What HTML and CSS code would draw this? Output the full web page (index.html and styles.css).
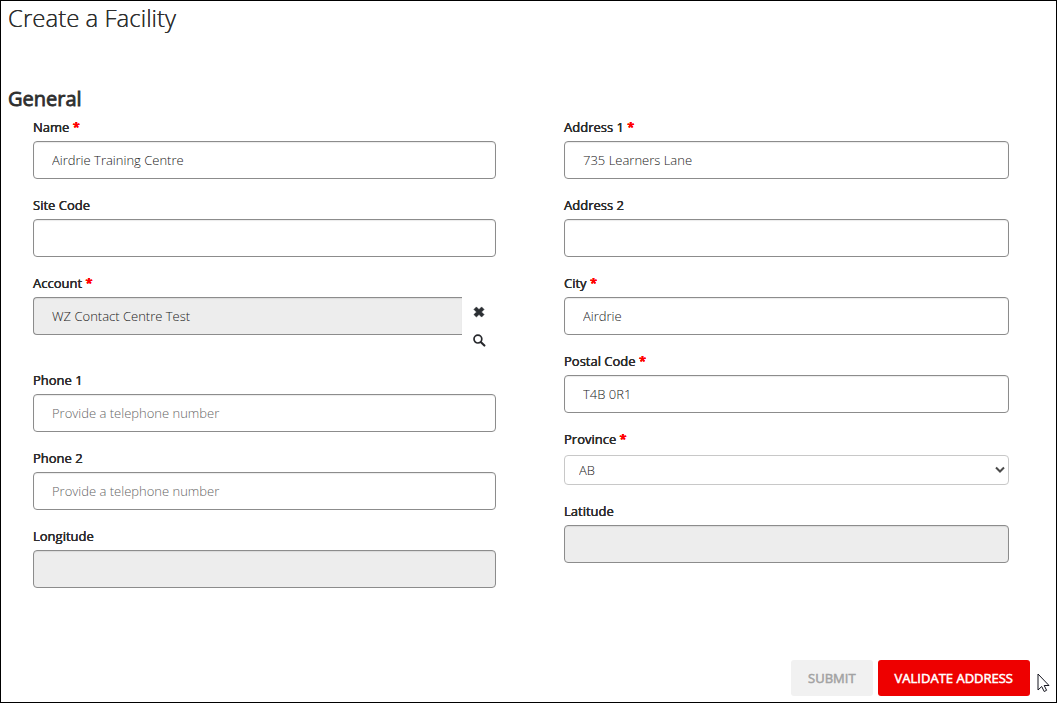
FILE: index.html
```html
<!DOCTYPE html>
<html lang="en">
<head>
<meta charset="utf-8">
<meta name="viewport" content="width=device-width, initial-scale=1">
<title>Create a Facility</title>
<link rel="stylesheet" href="styles.css">
</head>
<body>
<main class="page">
  <h1 class="title">Create a Facility</h1>
  <form>
    <h2 class="section-title">General</h2>
    <div class="columns">
      <div class="column">
        <div class="field">
          <label for="name">Name <span class="required">*</span></label>
          <input class="control" id="name" type="text" value="Airdrie Training Centre">
        </div>
        <div class="field">
          <label for="site-code">Site Code</label>
          <input class="control" id="site-code" type="text">
        </div>
        <div class="field">
          <label for="account">Account <span class="required">*</span></label>
          <div class="lookup">
            <input class="control" id="account" type="text" value="WZ Contact Centre Test" readonly>
            <div class="lookup-actions">
              <button class="icon-button" type="button" aria-label="Clear account">
                <svg width="12" height="12" viewBox="0 0 12 12"><path d="M3.4 .9 6 3.5 8.6 .9 11.1 3.4 8.5 6 11.1 8.6 8.6 11.1 6 8.5 3.4 11.1 .9 8.6 3.5 6 .9 3.4Z" fill="#2b2f33" stroke="#2b2f33" stroke-width=".5" stroke-linejoin="round"/></svg>
              </button>
              <button class="icon-button" type="button" aria-label="Search account">
                <svg width="13" height="13" viewBox="0 0 13 13" fill="none" stroke="#26282c"><circle cx="4.9" cy="5.1" r="3.9" stroke-width="1.7"/><path d="m8 8.2 3.4 3.4" stroke-width="2.1" stroke-linecap="round"/></svg>
              </button>
            </div>
          </div>
        </div>
        <div class="field">
          <label for="phone1">Phone 1</label>
          <input class="control" id="phone1" type="tel" placeholder="Provide a telephone number">
        </div>
        <div class="field">
          <label for="phone2">Phone 2</label>
          <input class="control" id="phone2" type="tel" placeholder="Provide a telephone number">
        </div>
        <div class="field">
          <label for="longitude">Longitude</label>
          <input class="control" id="longitude" type="text" readonly>
        </div>
      </div>
      <div class="column">
        <div class="field">
          <label for="address1">Address 1 <span class="required">*</span></label>
          <input class="control" id="address1" type="text" value="735 Learners Lane">
        </div>
        <div class="field">
          <label for="address2">Address 2</label>
          <input class="control" id="address2" type="text">
        </div>
        <div class="field">
          <label for="city">City <span class="required">*</span></label>
          <input class="control" id="city" type="text" value="Airdrie">
        </div>
        <div class="field">
          <label for="postal">Postal Code <span class="required">*</span></label>
          <input class="control" id="postal" type="text" value="T4B 0R1">
        </div>
        <div class="field">
          <label for="province">Province <span class="required">*</span></label>
          <div class="select-wrap">
            <select class="select" id="province"><option>AB</option></select>
            <svg class="chevron" width="10" height="8" viewBox="0 0 10 8" fill="none" stroke="#4a4a4a" stroke-width="2"><path d="m1 1.5 4 4 4-4"/></svg>
          </div>
        </div>
        <div class="field">
          <label for="latitude">Latitude</label>
          <input class="control" id="latitude" type="text" readonly>
        </div>
      </div>
    </div>
    <div class="actions">
      <button class="button" type="submit" disabled>SUBMIT</button>
      <button class="button button-primary" type="button">VALIDATE ADDRESS</button>
    </div>
  </form>
  <svg class="pointer" width="13" height="20" viewBox="0 0 13 20" aria-hidden="true"><path d="M1 1v16l3.7-3.5 2.5 5 2.4-1.2-2.4-4.8H12Z" fill="#fff" stroke="#15151f"/></svg>
</main>
</body>
</html>
```
FILE: styles.css
```css
* {
  box-sizing: border-box;
}

body {
  margin: 0;
  background: #fff;
  color: #2e2e2e;
  font-family: "Open Sans", "Noto Sans", sans-serif;
  font-size: 13px;
  line-height: 20px;
}

.page {
  position: relative;
  min-height: 100vh;
  padding: 0 26px 6px 7px;
  border: 1px solid #000;
}

.title {
  margin: 0 0 52px;
  font-size: 24px;
  font-weight: 300;
  line-height: 34px;
  text-shadow: 0 0 0 currentColor;
}

.section-title {
  margin: 0;
  padding-bottom: 6px;
  font-size: 20px;
  font-weight: 400;
  line-height: 24px;
  -webkit-text-stroke: 0.04em currentColor;
}

.columns {
  display: grid;
  grid-template-columns: 463fr 445fr;
  gap: 68px;
  padding: 0 21px 0 25px;
}

.column {
  display: flex;
  flex-direction: column;
  gap: 16px;
}

.field {
  display: flex;
  flex-direction: column;
  gap: 4px;
}

.field label {
  font-weight: 400;
  text-shadow: 0 0 0 currentColor, 0 0 0 currentColor;
}

.required {
  color: #f00;
  font-weight: 700;
}

.control {
  width: 100%;
  height: 38px;
  padding: 0 18px;
  border: 1px solid #8c8c8c;
  border-radius: 4px;
  background: #fff;
  box-shadow: inset 0 1px 1px rgba(0, 0, 0, 0.08);
  color: #222;
  font: inherit;
  font-weight: 300;
}

.control::placeholder {
  color: #666;
  opacity: 1;
}

.control:read-only {
  background: #ededed;
}

.lookup {
  display: flex;
}

.lookup .control {
  flex: 1;
  border-right: 0;
  border-radius: 4px 0 0 4px;
}

.lookup-actions {
  display: flex;
  flex-direction: column;
  width: 34px;
  padding-top: 1px;
}

.icon-button {
  display: flex;
  align-items: center;
  justify-content: center;
  height: 28px;
  padding: 0;
  border: 0;
  background: none;
}

.select-wrap {
  position: relative;
  display: flex;
  padding-top: 2px;
}

.select {
  width: 100%;
  height: 30px;
  padding: 0 24px 0 14px;
  border: 1px solid #c8c8c8;
  border-radius: 4px;
  background: #fff;
  color: #222;
  font: inherit;
  font-weight: 300;
  appearance: none;
}

.chevron {
  position: absolute;
  top: 13px;
  right: 4px;
  pointer-events: none;
}

.actions {
  display: flex;
  justify-content: flex-end;
  gap: 5px;
  margin-top: 72px;
}

.button {
  height: 36px;
  padding: 0 17px;
  border: 0;
  border-radius: 3px;
  background: #f1f1f1;
  color: #a3a3a3;
  font: inherit;
  -webkit-text-stroke: 0.04em currentColor;
}

.button-primary {
  background: #ee0000;
  color: #fff;
}

.pointer {
  position: absolute;
  right: 6px;
  bottom: 9px;
}
```
